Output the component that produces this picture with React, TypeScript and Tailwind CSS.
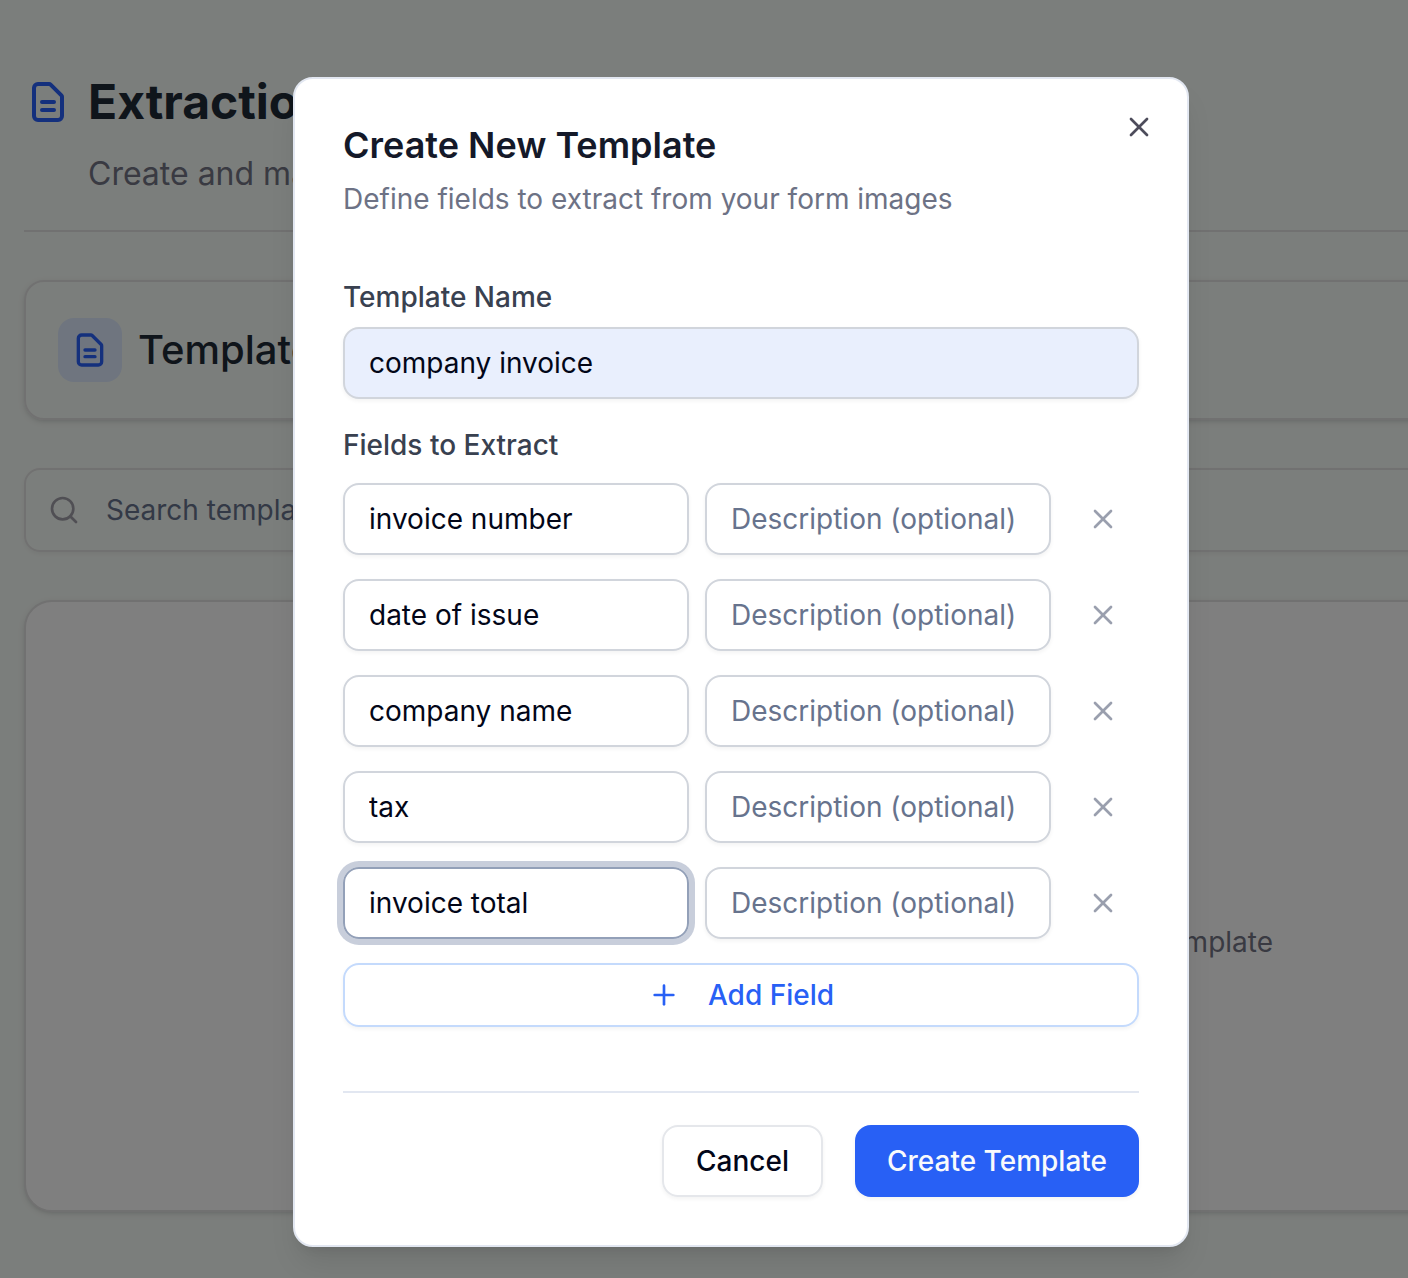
import { Plus, Search, X } from "lucide-react";

const fields = ["invoice number", "date of issue", "company name", "tax", "invoice total"];
const focusedField = 4;

const inputBase =
  "h-[72px] w-full min-w-0 rounded-[16px] border-2 px-6 text-[28px] text-slate-950 outline-none placeholder:text-[#67738d]";

function DocumentIcon({ className }: { className: string }) {
  return (
    <svg
      className={className}
      viewBox="0 0 24 24"
      fill="none"
      stroke="currentColor"
      strokeWidth={2}
      strokeLinecap="round"
      strokeLinejoin="round"
    >
      <path d="M9 12h6m-6 4h6m2 5H7a2 2 0 01-2-2V5a2 2 0 012-2h5.586a1 1 0 01.707.293l5.414 5.414a1 1 0 01.293.707V19a2 2 0 01-2 2z" />
    </svg>
  );
}

function TemplatesPage() {
  return (
    <main className="flex w-[1500px] flex-col pl-6 pt-[70px]">
      <header className="flex h-[162px] flex-col border-b-2 border-[#e2e2e2]">
        <div className="flex h-16 items-center gap-4">
          <DocumentIcon className="size-12 text-[#2860fa]" />
          <h1 className="text-[48px] font-bold leading-[64px] text-[#1f2a37]">Extraction</h1>
        </div>
        <p className="mt-4 pl-16 text-[32px] leading-[48px] text-[#737484]">Create and manage</p>
      </header>

      <section className="mt-12 flex h-[140px] items-center gap-4 rounded-[20px] border-2 border-[#e2e2e2] px-8 shadow-[0_2px_6px_rgba(0,0,0,0.1),0_2px_4px_-2px_rgba(0,0,0,0.1)]">
        <div className="flex size-16 items-center justify-center rounded-[16px] bg-[#deebff]">
          <DocumentIcon className="size-10 text-[#2860fa]" />
        </div>
        <h2 className="text-[40px] font-medium leading-[56px] text-[#1f2a37]">Templates</h2>
      </section>

      <div className="mt-12 flex h-[84px] items-center gap-[26px] rounded-[16px] border-2 border-[#e2e2e2] px-[22px] shadow-[0_2px_4px_rgba(0,0,0,0.05)]">
        <Search className="size-8 text-[#a09fa8]" />
        <span className="text-[28px] leading-10 text-[#67738d]">Search templates...</span>
      </div>

      <section className="mt-12 h-[612px] rounded-[28px] border-2 border-[#e2e2e2] bg-white shadow-[0_2px_6px_rgba(0,0,0,0.1),0_2px_4px_-2px_rgba(0,0,0,0.1)]">
        <p className="mt-[320px] w-[1247px] text-right text-[28px] leading-10 text-[#737484]">
          Create your first template
        </p>
      </section>
    </main>
  );
}

function CreateTemplateDialog() {
  return (
    <div
      role="dialog"
      className="relative ml-[293px] mt-[77px] flex h-[1170px] w-[896px] flex-col rounded-[20px] border-2 border-[#e2e7f1] bg-white p-12 shadow-[0_20px_30px_-6px_rgba(0,0,0,0.1),0_8px_12px_-8px_rgba(0,0,0,0.1)]"
    >
      <button className="absolute right-8 top-8 text-[#4d4c5b]" aria-label="Close">
        <X className="size-8" />
      </button>

      <h2 className="text-[36px] font-semibold leading-9 text-[#141929]">Create New Template</h2>
      <p className="mt-4 text-[28px] leading-10 text-[#6d7285]">
        Define fields to extract from your form images
      </p>

      <label className="mt-[58px] text-[28px] font-medium leading-10 text-[#394150]">Template Name</label>
      <input
        className={`${inputBase} mt-[10px] border-gray-300 bg-[#e9effd] shadow-[0_2px_4px_rgba(0,0,0,0.05)]`}
        defaultValue="company invoice"
      />

      <div className="mt-[26px] text-[28px] font-medium leading-10 text-[#394150]">Fields to Extract</div>
      <div className="mt-[18px] flex flex-col gap-6">
        {fields.map((field, i) => (
          <div key={field} className="flex items-center gap-4">
            <input
              className={`${inputBase} flex-1 ${
                i === focusedField
                  ? "border-[#93a0b8] shadow-[0_0_0_6px_#c8cedb]"
                  : "border-gray-300 shadow-[0_2px_4px_rgba(0,0,0,0.05)]"
              }`}
              defaultValue={field}
            />
            <input
              className={`${inputBase} flex-1 border-gray-300 shadow-[0_2px_4px_rgba(0,0,0,0.05)]`}
              placeholder="Description (optional)"
            />
            <button
              className="flex size-[72px] shrink-0 items-center justify-center text-[#9a9fae]"
              aria-label="Remove field"
            >
              <X className="size-8" />
            </button>
          </div>
        ))}
        <button className="flex h-16 items-center justify-center gap-7 rounded-[16px] border-2 border-[#c4dafc] text-[28px] font-medium text-[#2860f5] shadow-[0_2px_4px_rgba(0,0,0,0.05)]">
          <Plus className="size-8" />
          Add Field
        </button>
      </div>

      <footer className="mt-16 flex justify-end gap-8 border-t-2 border-[#e2e7f1] pt-8">
        <button className="h-[72px] w-[161px] rounded-[16px] border-2 border-gray-200 text-[28px] font-medium text-slate-950 shadow-[0_2px_4px_rgba(0,0,0,0.05)]">
          Cancel
        </button>
        <button className="h-[72px] w-[284px] rounded-[16px] bg-[#2860f5] text-[28px] font-medium text-slate-50 shadow-[0_2px_4px_rgba(0,0,0,0.05)]">
          Create Template
        </button>
      </footer>
    </div>
  );
}

export default function App() {
  return (
    <div className="relative h-[1278px] w-full overflow-hidden bg-[#f7fcf8] font-['Inter',sans-serif] antialiased">
      <TemplatesPage />
      <div className="absolute inset-0 flex items-start bg-black/50">
        <CreateTemplateDialog />
      </div>
    </div>
  );
}
